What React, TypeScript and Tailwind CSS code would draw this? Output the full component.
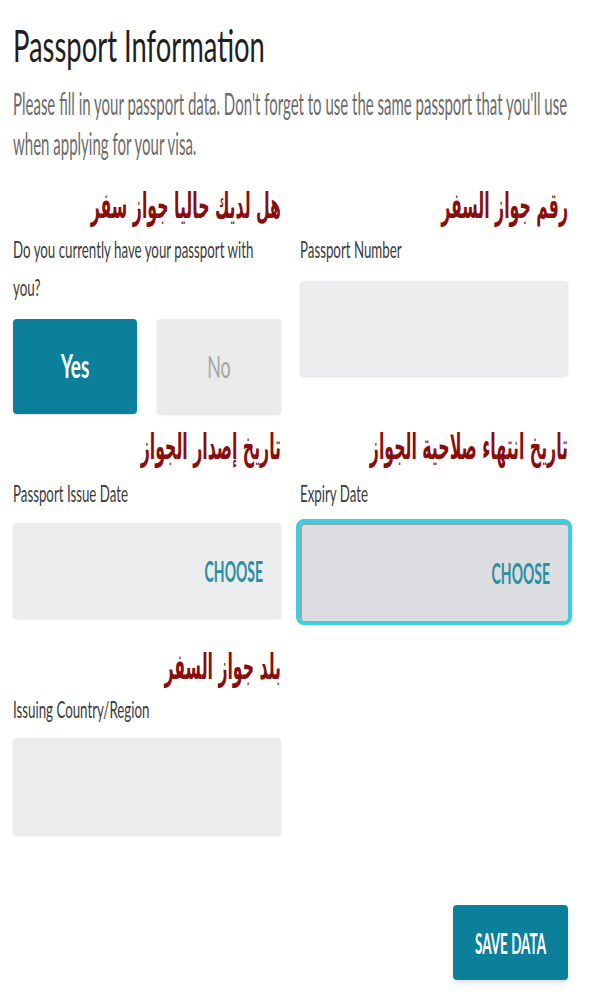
import React from "react";

// the screenshot is squeezed sideways, so every text line is stretched upward with scale-y
function ArLine({ children }: { children: React.ReactNode }) {
  return (
    <div
      dir="rtl"
      className="h-[40px] origin-center scale-y-[2.05] text-right font-['DejaVu_Sans_Condensed','DejaVu_Sans',sans-serif] text-[17.5px] font-bold leading-[40px] text-[#8a0d0d]"
    >
      {children}
    </div>
  );
}

function Label({ children }: { children: React.ReactNode }) {
  return (
    <div className="h-[38px] origin-center scale-y-[1.7] text-[13.3px] leading-[38px] text-[#3a3a3a]">
      {children}
    </div>
  );
}

function ChooseBox({ active }: { active?: boolean }) {
  return (
    <button
      className={
        active
          ? "flex h-[98px] w-full items-center justify-end rounded bg-[#dcdde0] pr-[18px] shadow-[inset_1px_1px_0_1px_#9ea3a8] outline-[4px] outline-[#3ccde0] outline-solid"
          : "flex h-[95px] w-full items-center justify-end rounded bg-[#ebeced] pr-[18px] shadow-sm"
      }
    >
      <span className="inline-block origin-center scale-y-[2.1] text-[14px] font-bold text-[#2b8ea5]">CHOOSE</span>
    </button>
  );
}

export default function App() {
  return (
    <div className="min-h-[1000px] w-[600px] bg-white pl-[13px] pr-[32px] font-['Lato','Open_Sans',sans-serif]">
      {/* HEADER */}
      <header className="pt-[26px]">
        <h1 className="h-[40px] origin-center scale-y-[1.63] text-[27.4px] font-normal leading-[40px] text-[#1f1f1f]">
          Passport Information
        </h1>
        <div className="mt-[15.5px] text-[15px] leading-[40px] text-[#6b6b6b]">
          <p className="origin-center scale-y-[2.1] whitespace-nowrap">
            Please fill in your passport data. Don't forget to use the same passport that you'll use
          </p>
          <p className="origin-center scale-y-[2.1]">when applying for your visa.</p>
        </div>
      </header>

      {/* ROW 1 */}
      <div className="mt-[24.5px] grid grid-cols-2 gap-x-[19px]">
        <div className="flex flex-col">
          <ArLine>هل لديك حاليا جواز سفر</ArLine>
          <div className="mt-[4px]">
            <Label>Do you currently have your passport with</Label>
            <Label>you?</Label>
          </div>
          <div className="mt-[13px] grid grid-cols-2 gap-x-[20px]">
            <button className="h-[95px] rounded bg-[#0c7f9b] shadow-sm">
              <span className="inline-block origin-center scale-y-[1.75] text-[19px] font-bold text-white">Yes</span>
            </button>
            <button className="h-[95px] rounded bg-[#ebebeb] shadow-sm">
              <span className="inline-block origin-center scale-y-[1.75] text-[18px] text-[#a6a6a6]">No</span>
            </button>
          </div>
        </div>
        <div className="flex flex-col">
          <ArLine>رقم جواز السفر</ArLine>
          <div className="mt-[4px]">
            <Label>Passport Number</Label>
          </div>
          <div className="mt-[13px] h-[95px] rounded bg-[#ebeced] shadow-sm" />
        </div>
      </div>

      {/* ROW 2 */}
      <div className="mt-[13px] grid grid-cols-2 gap-x-[19px]">
        <div className="flex flex-col">
          <ArLine>تاريخ إصدار الجواز</ArLine>
          <div className="mt-[7px]">
            <Label>Passport Issue Date</Label>
          </div>
          <div className="mt-[11px]">
            <ChooseBox />
          </div>
        </div>
        <div className="flex flex-col">
          <ArLine>تاريخ انتهاء صلاحية الجواز</ArLine>
          <div className="mt-[7px]">
            <Label>Expiry Date</Label>
          </div>
          <div className="mt-[11px]">
            <ChooseBox active />
          </div>
        </div>
      </div>

      {/* ROW 3 */}
      <div className="mt-[26px] grid grid-cols-2 gap-x-[19px]">
        <div className="flex flex-col">
          <ArLine>بلد جواز السفر</ArLine>
          <div className="mt-[3px]">
            <Label>Issuing Country/Region</Label>
          </div>
          <div className="mt-[10px] h-[97px] rounded bg-[#ebeced] shadow-sm" />
        </div>
      </div>

      {/* SAVE */}
      <div className="mt-[70px] flex justify-end">
        <button className="h-[75px] w-[115px] rounded bg-[#0c7f9b] shadow-md">
          <span className="inline-block origin-center scale-y-[2.05] text-[13.5px] font-bold text-white">SAVE DATA</span>
        </button>
      </div>
    </div>
  );
}
